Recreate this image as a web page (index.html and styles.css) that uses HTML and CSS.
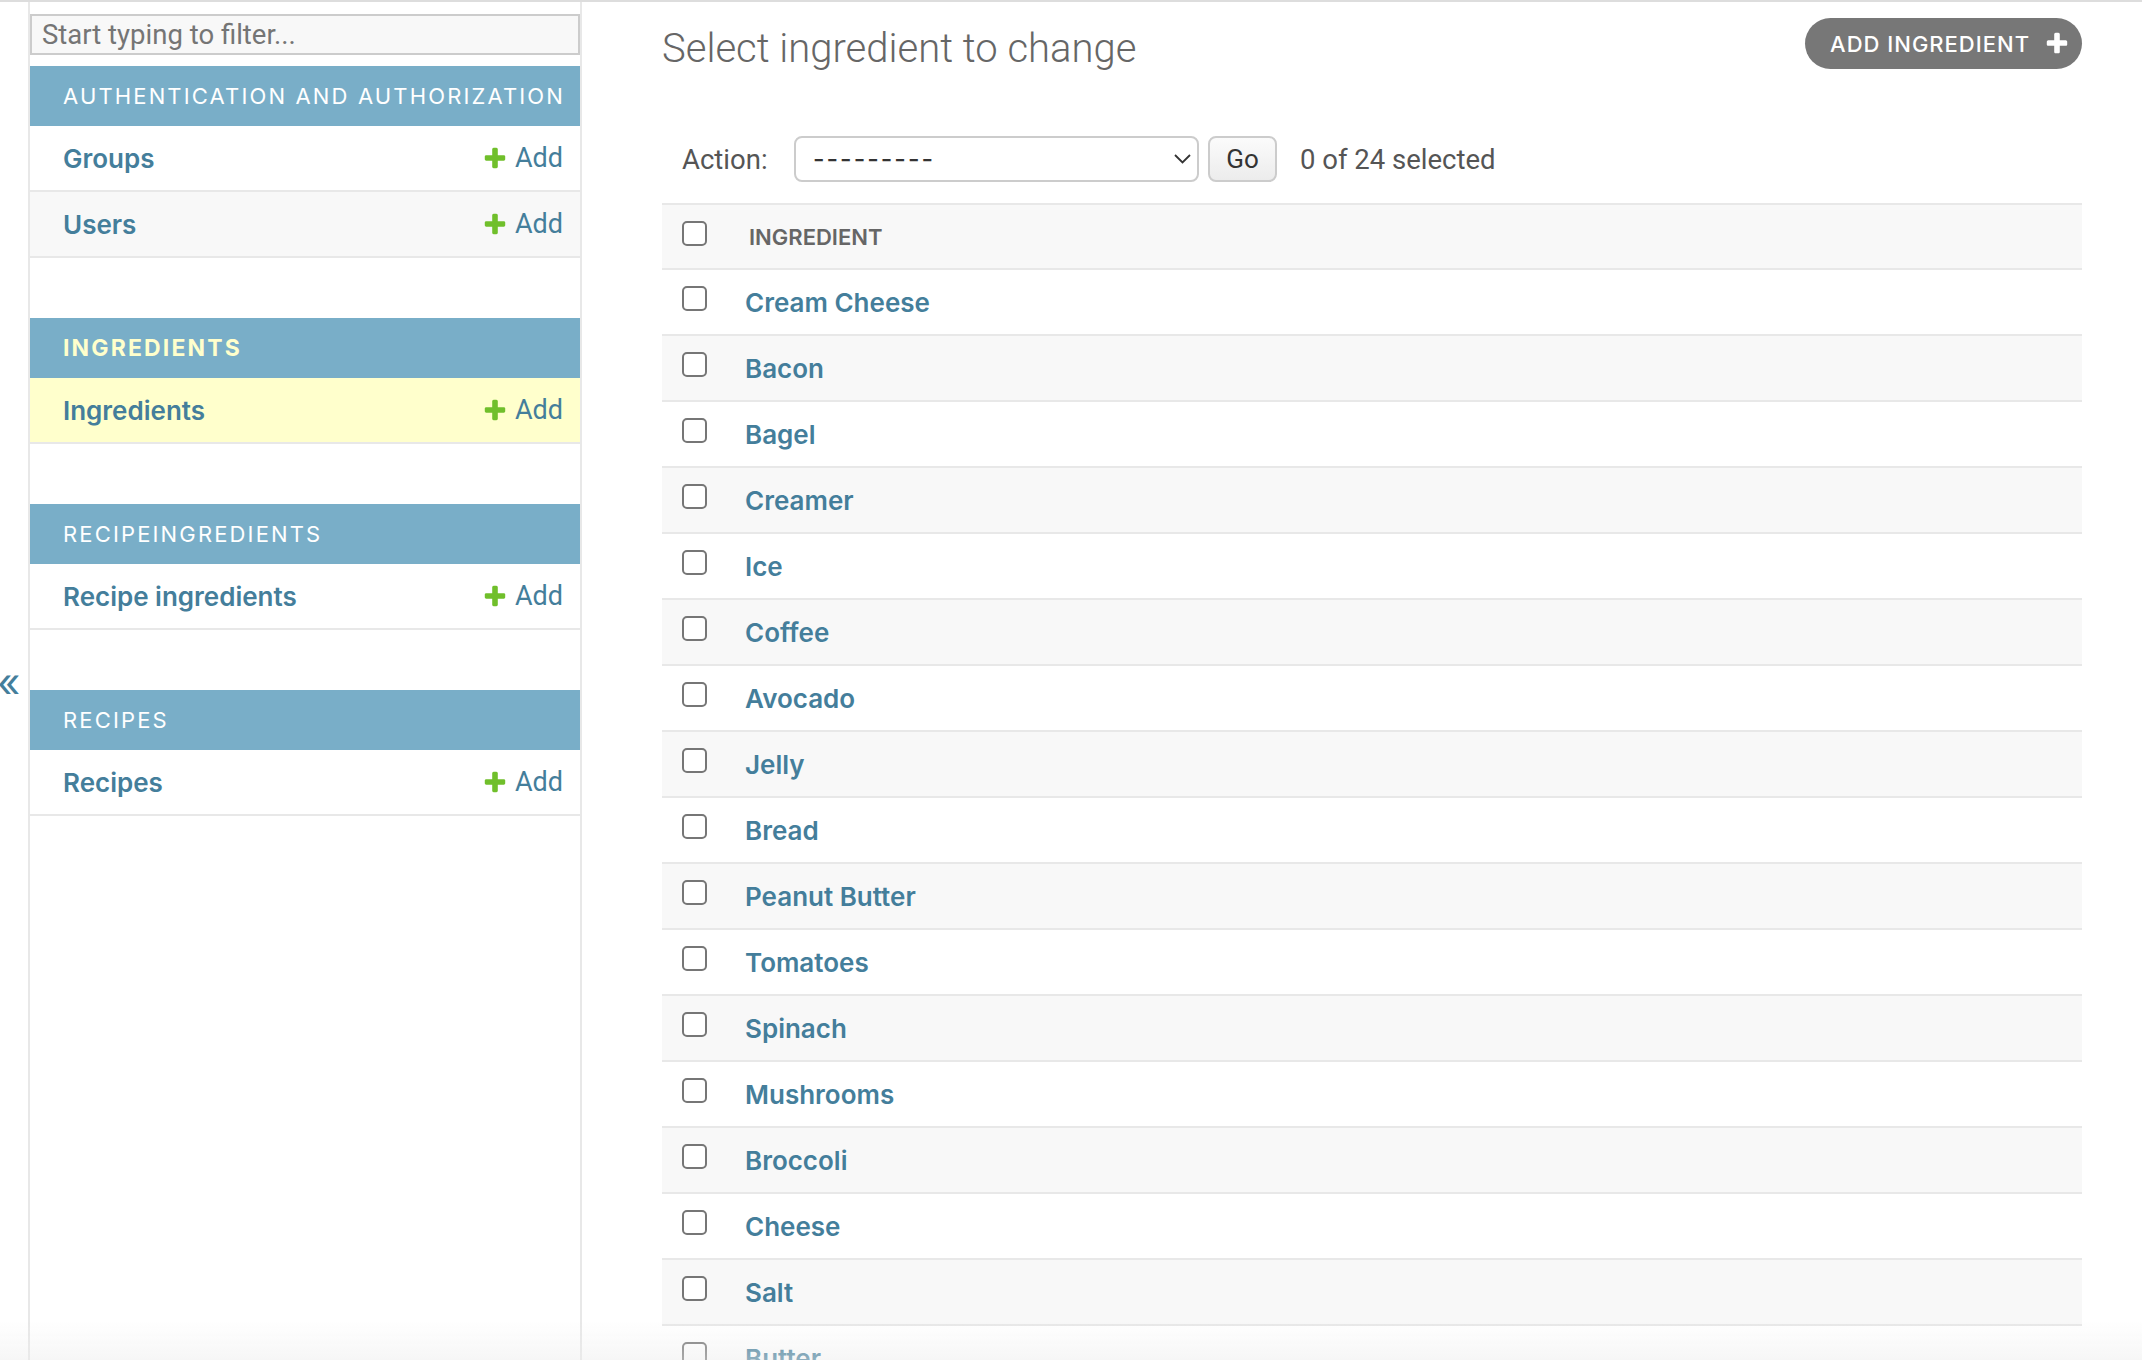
FILE: index.html
```html
<!DOCTYPE html>
<html lang="en">
<head>
<meta charset="utf-8">
<title>Select ingredient to change</title>
<link rel="stylesheet" href="styles.css">
</head>
<body>
<div class="page">
  <button class="toggle-nav" type="button">«</button>
  <nav class="sidebar">
    <input class="nav-filter" type="search" placeholder="Start typing to filter...">

    <div class="module">
      <div class="caption">Authentication and Authorization</div>
      <div class="row"><a class="model" href="#">Groups</a><a class="add" href="#"><svg viewBox="0 0 1792 1792"><path fill="#70bf2b" d="M1600 796v192q0 40-28 68t-68 28h-416v416q0 40-28 68t-68 28h-192q-40 0-68-28t-28-68v-416h-416q-40 0-68-28t-28-68v-192q0-40 28-68t68-28h416v-416q0-40 28-68t68-28h192q40 0 68 28t28 68v416h416q40 0 68 28t28 68z"/></svg>Add</a></div>
      <div class="row alt"><a class="model" href="#">Users</a><a class="add" href="#"><svg viewBox="0 0 1792 1792"><path fill="#70bf2b" d="M1600 796v192q0 40-28 68t-68 28h-416v416q0 40-28 68t-68 28h-192q-40 0-68-28t-28-68v-416h-416q-40 0-68-28t-28-68v-192q0-40 28-68t68-28h416v-416q0-40 28-68t68-28h192q40 0 68 28t28 68v416h416q40 0 68 28t28 68z"/></svg>Add</a></div>
    </div>

    <div class="module">
      <div class="caption current">Ingredients</div>
      <div class="row selected"><a class="model" href="#">Ingredients</a><a class="add" href="#"><svg viewBox="0 0 1792 1792"><path fill="#70bf2b" d="M1600 796v192q0 40-28 68t-68 28h-416v416q0 40-28 68t-68 28h-192q-40 0-68-28t-28-68v-416h-416q-40 0-68-28t-28-68v-192q0-40 28-68t68-28h416v-416q0-40 28-68t68-28h192q40 0 68 28t28 68v416h416q40 0 68 28t28 68z"/></svg>Add</a></div>
    </div>

    <div class="module">
      <div class="caption">Recipeingredients</div>
      <div class="row"><a class="model" href="#">Recipe ingredients</a><a class="add" href="#"><svg viewBox="0 0 1792 1792"><path fill="#70bf2b" d="M1600 796v192q0 40-28 68t-68 28h-416v416q0 40-28 68t-68 28h-192q-40 0-68-28t-28-68v-416h-416q-40 0-68-28t-28-68v-192q0-40 28-68t68-28h416v-416q0-40 28-68t68-28h192q40 0 68 28t28 68v416h416q40 0 68 28t28 68z"/></svg>Add</a></div>
    </div>

    <div class="module">
      <div class="caption">Recipes</div>
      <div class="row"><a class="model" href="#">Recipes</a><a class="add" href="#"><svg viewBox="0 0 1792 1792"><path fill="#70bf2b" d="M1600 796v192q0 40-28 68t-68 28h-416v416q0 40-28 68t-68 28h-192q-40 0-68-28t-28-68v-416h-416q-40 0-68-28t-28-68v-192q0-40 28-68t68-28h416v-416q0-40 28-68t68-28h192q40 0 68 28t28 68v416h416q40 0 68 28t28 68z"/></svg>Add</a></div>
    </div>
  </nav>

  <main class="main">
    <div class="head">
      <h1>Select ingredient to change</h1>
      <a class="addbtn" href="#">Add ingredient<svg viewBox="0 0 1792 1792"><path fill="#fff" d="M1600 736v192q0 40-28 68t-68 28h-416v416q0 40-28 68t-68 28h-192q-40 0-68-28t-28-68v-416h-416q-40 0-68-28t-28-68v-192q0-40 28-68t68-28h416v-416q0-40 28-68t68-28h192q40 0 68 28t28 68v416h416q40 0 68 28t28 68z"/></svg></a>
    </div>

    <div class="actions">
      <span class="label">Action:</span>
      <div class="select"><span class="dashes">---------</span><svg viewBox="0 0 17 10"><polyline points="1,1 8.5,8.5 16,1" fill="none" stroke="#333" stroke-width="1.8"/></svg></div>
      <button class="go" type="button">Go</button>
      <span class="counter">0 of 24 selected</span>
    </div>

    <div class="results">
      <div class="thead">
        <div class="cb head-cb"><input type="checkbox"></div>
        <div class="th">Ingredient</div>
      </div>
      <div class="tbody">
        <div class="tr"><div class="cb"><input type="checkbox"></div><a class="td" href="#">Cream Cheese</a></div>
        <div class="tr"><div class="cb"><input type="checkbox"></div><a class="td" href="#">Bacon</a></div>
        <div class="tr"><div class="cb"><input type="checkbox"></div><a class="td" href="#">Bagel</a></div>
        <div class="tr"><div class="cb"><input type="checkbox"></div><a class="td" href="#">Creamer</a></div>
        <div class="tr"><div class="cb"><input type="checkbox"></div><a class="td" href="#">Ice</a></div>
        <div class="tr"><div class="cb"><input type="checkbox"></div><a class="td" href="#">Coffee</a></div>
        <div class="tr"><div class="cb"><input type="checkbox"></div><a class="td" href="#">Avocado</a></div>
        <div class="tr"><div class="cb"><input type="checkbox"></div><a class="td" href="#">Jelly</a></div>
        <div class="tr"><div class="cb"><input type="checkbox"></div><a class="td" href="#">Bread</a></div>
        <div class="tr"><div class="cb"><input type="checkbox"></div><a class="td" href="#">Peanut Butter</a></div>
        <div class="tr"><div class="cb"><input type="checkbox"></div><a class="td" href="#">Tomatoes</a></div>
        <div class="tr"><div class="cb"><input type="checkbox"></div><a class="td" href="#">Spinach</a></div>
        <div class="tr"><div class="cb"><input type="checkbox"></div><a class="td" href="#">Mushrooms</a></div>
        <div class="tr"><div class="cb"><input type="checkbox"></div><a class="td" href="#">Broccoli</a></div>
        <div class="tr"><div class="cb"><input type="checkbox"></div><a class="td" href="#">Cheese</a></div>
        <div class="tr"><div class="cb"><input type="checkbox"></div><a class="td" href="#">Salt</a></div>
        <div class="tr"><div class="cb"><input type="checkbox"></div><a class="td" href="#">Butter</a></div>
      </div>
    </div>
  </main>
</div>
<div class="fade"></div>
</body>
</html>
```

FILE: styles.css
```css
html, body {
  margin: 0;
  padding: 0;
  height: 100%;
  overflow: hidden;
  background: #fff;
}

body {
  box-sizing: border-box;
  border-top: 2px solid #dddddd;
  font-family: Roboto, "Liberation Sans", sans-serif;
  color: #333;
}

.page {
  display: flex;
  height: 100%;
}

/* toggle column */
.toggle-nav {
  box-sizing: border-box;
  flex: 0 0 30px;
  display: flex;
  align-items: center;
  justify-content: flex-start;
  padding: 4px 0 0 0;
  margin: 0;
  border: 0;
  border-right: 2px solid #e8e8e8;
  background: #fff;
  color: #447e9b;
  font-family: Inter, "DejaVu Sans", sans-serif;
  font-size: 40px;
  line-height: 1;
  text-indent: -3px;
}

/* sidebar */
.sidebar {
  flex: 0 0 550px;
  border-right: 2px solid #e8e8e8;
}

.nav-filter {
  display: block;
  box-sizing: border-box;
  width: 100%;
  height: 41px;
  margin: 12px 0 11px;
  padding: 0 10px;
  border: 2px solid #cccccc;
  border-radius: 0;
  background: #f8f8f8;
  font-family: Roboto, "Liberation Sans", sans-serif;
  font-size: 27.5px;
  color: #333;
  outline: none;
  -webkit-appearance: none;
  appearance: none;
}

.nav-filter::placeholder {
  color: #757575;
}

.module {
  margin-bottom: 60px;
}

.caption {
  display: flex;
  align-items: center;
  height: 60px;
  padding-left: 33px;
  background: #79aec8;
  color: #fff;
  font-family: Inter, "Liberation Sans", sans-serif;
  font-size: 22px;
  font-weight: 400;
  letter-spacing: 2.15px;
  text-transform: uppercase;
}

.caption.current {
  color: #ffffcc;
  font-weight: 700;
  font-size: 23px;
}

.row {
  display: flex;
  align-items: center;
  justify-content: space-between;
  height: 64px;
  padding: 0 17px 0 33px;
  border-bottom: 2px solid #e8e8e8;
  background: #fff;
}

.row.alt {
  background: #f8f8f8;
}

.row.selected {
  background: #ffffcc;
}

.model {
  font-family: Inter, "Liberation Sans", sans-serif;
  font-size: 26px;
  font-weight: 600;
  color: #447e9b;
  text-decoration: none;
}

.add {
  display: flex;
  align-items: center;
  gap: 7px;
  font-size: 27px;
  color: #447e9b;
  text-decoration: none;
}

.add svg {
  width: 26px;
  height: 26px;
}

/* main content */
.main {
  flex: 1;
  min-width: 0;
  padding: 16px 60px 0 80px;
}

.head {
  display: flex;
  justify-content: space-between;
  align-items: flex-start;
  height: 54px;
}

.head h1 {
  margin: 7px 0 0;
  font-family: Roboto, "Liberation Sans", sans-serif;
  font-size: 40px;
  font-weight: 300;
  line-height: 48px;
  color: #666;
}

.addbtn {
  display: flex;
  align-items: center;
  gap: 14px;
  box-sizing: border-box;
  height: 51px;
  padding: 0 12px 0 25px;
  border-radius: 26px;
  background: #777777;
  color: #fff;
  font-family: Inter, "Liberation Sans", sans-serif;
  font-size: 22px;
  font-weight: 500;
  letter-spacing: 1px;
  text-transform: uppercase;
  text-decoration: none;
}

.addbtn svg {
  width: 26px;
  height: 26px;
}

/* actions bar */
.actions {
  display: flex;
  align-items: center;
  margin-top: 44px;
  padding: 20px 20px 21px;
  color: #555;
  font-size: 27.5px;
}

.label {
  flex: 0 0 112px;
}

.select {
  display: flex;
  align-items: center;
  justify-content: space-between;
  box-sizing: border-box;
  width: 405px;
  height: 46px;
  padding: 0 6px 0 17px;
  border: 2px solid #cccccc;
  border-radius: 8px;
  background: #fff;
  color: #333;
  font-family: Inter, "Liberation Sans", sans-serif;
  font-size: 25px;
}

.dashes {
  letter-spacing: 2px;
  font-weight: 500;
}

.select svg {
  width: 17px;
  height: 10px;
}

.go {
  box-sizing: border-box;
  width: 69px;
  height: 46px;
  margin: 0 23px 0 9px;
  padding: 0;
  border: 2px solid #cccccc;
  border-radius: 8px;
  background: linear-gradient(#fbfbfb, #ececec);
  color: #333;
  font-family: Roboto, "Liberation Sans", sans-serif;
  font-size: 26px;
}

.counter {
  color: #555;
}

/* results table */
.results {
  border-top: 2px solid #e8e8e8;
}

.thead {
  display: flex;
  height: 63px;
  background: #f8f8f8;
  border-bottom: 2px solid #e8e8e8;
}

.cb {
  flex: 0 0 63px;
  padding: 16px 0 0 20px;
}

.head-cb {
  flex-basis: 67px;
}

.cb input {
  display: block;
  box-sizing: border-box;
  width: 25px;
  height: 25px;
  margin: 0;
  border: 2px solid #767676;
  border-radius: 5px;
  background: #fff;
  -webkit-appearance: none;
  appearance: none;
}

.th {
  align-self: center;
  font-family: Inter, "Liberation Sans", sans-serif;
  font-size: 22px;
  font-weight: 600;
  color: #666;
  text-transform: uppercase;
}

.tr {
  display: flex;
  height: 64px;
  border-bottom: 2px solid #e8e8e8;
  background: #fff;
}

.tr:nth-child(even) {
  background: #f8f8f8;
}

.td {
  align-self: center;
  font-family: Inter, "Liberation Sans", sans-serif;
  font-size: 26px;
  font-weight: 600;
  color: #447e9b;
  text-decoration: none;
}

/* bottom window fade */
.fade {
  position: fixed;
  left: 0;
  right: 0;
  bottom: 0;
  height: 40px;
  background: linear-gradient(rgba(238, 238, 238, 0), rgba(236, 236, 236, 0.45));
  pointer-events: none;
}
```
